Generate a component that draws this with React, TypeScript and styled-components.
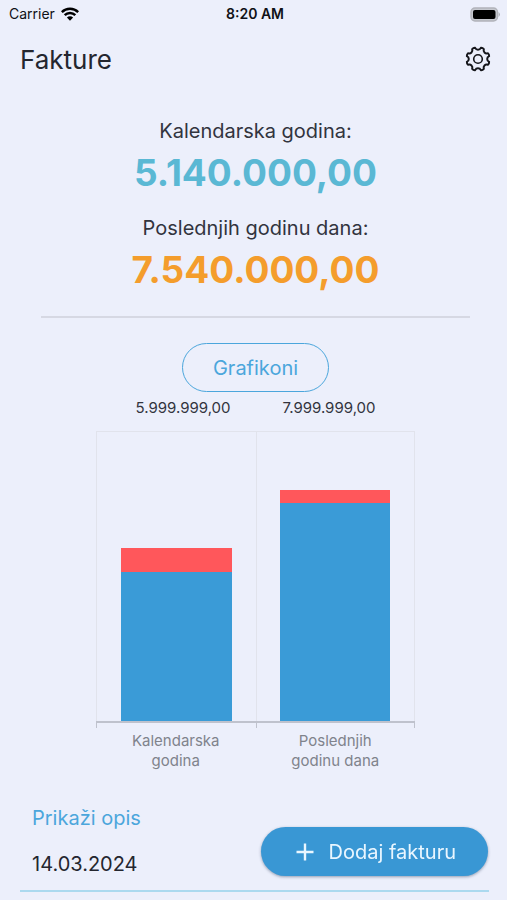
import React from 'react';
import styled, { createGlobalStyle } from 'styled-components';

const colors = {
  page: '#eceffb',
  ink: '#24262f',
  text: '#32343e',
  muted: '#80838c',
  blue: '#3a9bd7',
  link: '#4ba6dc',
  teal: '#5ab8d4',
  orange: '#f49d2c',
  red: '#ff575b',
  grid: '#e1e3ec',
  axis: '#bfc2cd',
};

const GlobalStyle = createGlobalStyle`
  *, *::before, *::after { box-sizing: border-box; }
  body {
    margin: 0;
    background: ${colors.page};
    color: ${colors.ink};
    font-family: Inter, Roboto, sans-serif;
  }
  button { font: inherit; cursor: pointer; }
`;

const Screen = styled.div`
  position: relative;
  display: flex;
  flex-direction: column;
  min-height: 100vh;
  overflow: hidden;
`;

const StatusBar = styled.div`
  display: grid;
  grid-template-columns: 1fr auto 1fr;
  align-items: center;
  height: 28px;
  padding: 0 6px 0 9px;
  font-size: 14px;
  line-height: 20px;
  color: #101116;
`;

const Carrier = styled.span`
  display: flex;
  align-items: center;
  gap: 6px;
`;

const Clock = styled.span`
  font-weight: 600;
`;

const BatterySlot = styled.span`
  display: flex;
  justify-content: flex-end;
`;

const Header = styled.header`
  display: flex;
  align-items: center;
  justify-content: space-between;
  height: 62px;
  padding: 0 16px 0 20px;
`;

const Title = styled.h1`
  margin: 0;
  padding-top: 2px;
  font-size: 26px;
  line-height: 32px;
  font-weight: 400;
`;

const IconButton = styled.button`
  display: flex;
  padding: 0;
  border: 0;
  background: none;
  color: #15161b;
`;

const Summary = styled.main`
  display: flex;
  flex-direction: column;
  align-items: center;
  padding: 28px 37px 0 41px;
`;

const Total = styled.section`
  display: flex;
  flex-direction: column;
  align-items: center;
  margin-bottom: 21px;
`;

const TotalLabel = styled.h2`
  margin: 0;
  font-size: 20px;
  line-height: 26px;
  font-weight: 400;
  color: ${colors.text};
`;

const Amount = styled.p<{ $color: string }>`
  margin: 0;
  padding-top: 8px;
  font-size: 37px;
  line-height: 42px;
  font-weight: 700;
  color: ${(p) => p.$color};
`;

const Divider = styled.hr`
  width: 100%;
  height: 2px;
  margin: 4px 0 25px;
  border: 0;
  background: #d6d8e3;
`;

const OutlineButton = styled.button`
  height: 49px;
  padding: 0 30px;
  border: 1px solid ${colors.link};
  border-radius: 25px;
  background: none;
  font-size: 20px;
  line-height: 26px;
  color: ${colors.link};
`;

const Chart = styled.figure`
  width: 100%;
  margin: 0;
  padding: 0 55px;
`;

const Limits = styled.div`
  display: flex;
  justify-content: center;
  gap: 52px;
  padding: 6px 0 13px;
  font-size: 15px;
  line-height: 20px;
  color: ${colors.text};
`;

const Plot = styled.div`
  display: grid;
  grid-template-columns: 1fr 1fr;
  height: 290px;
  border: solid ${colors.grid};
  border-width: 1px 1px 0;
`;

const Band = styled.div`
  display: flex;
  flex-direction: column;
  align-items: center;
  justify-content: flex-end;
  & + & { border-left: 1px solid ${colors.grid}; }
`;

const Bar = styled.div`
  width: 70%;
  flex: none;
`;

const Remaining = styled(Bar)`
  background: ${colors.red};
`;

const Earned = styled(Bar)`
  background: ${colors.blue};
`;

const Axis = styled.div`
  display: grid;
  grid-template-columns: 1fr 1fr;
  height: 7px;
  border: solid ${colors.axis};
  border-width: 2px 1px 0;
`;

const Tick = styled.span`
  & + & { border-left: 1px solid ${colors.axis}; }
`;

const Categories = styled.figcaption`
  display: grid;
  grid-template-columns: 1fr 1fr;
  padding-top: 3px;
  font-size: 15px;
  line-height: 20px;
  text-align: center;
  color: ${colors.muted};
`;

const Category = styled.span`
  justify-self: center;
  max-width: 112px;
`;

const Invoices = styled.section`
  display: flex;
  flex-direction: column;
  align-items: flex-start;
  padding: 34px 18px 0 20px;
`;

const TextButton = styled.button`
  padding: 0;
  margin: 0 12px;
  border: 0;
  background: none;
  font-size: 20px;
  line-height: 26px;
  color: ${colors.link};
`;

const InvoiceRow = styled.div`
  width: 100%;
  padding: 20px 12px 13px;
  border-bottom: 2px solid #abd9ef;
  font-size: 20px;
  line-height: 26px;
`;

const AddButton = styled.button`
  position: fixed;
  right: 19px;
  bottom: 24px;
  display: flex;
  align-items: center;
  gap: 15px;
  height: 49px;
  padding: 0 32px 0 35px;
  border: 0;
  border-radius: 25px;
  background: #3997d4;
  box-shadow: 0 1px 3px rgba(40, 60, 90, 0.45);
  font-size: 20px;
  line-height: 26px;
  color: #e9f6ff;
`;

const WifiIcon = () => (
  <svg width="18" height="14" viewBox="0 0 18 14" fill="none" stroke="#000" strokeWidth="2.5" aria-hidden="true">
    <path d="M0.8 5.1A11.6 11.6 0 0 1 17.2 5.1" />
    <path d="M3.7 8.2A7.5 7.5 0 0 1 14.3 8.2" />
    <path d="M9 13.8L5.9 10.6A4.4 4.4 0 0 1 12.1 10.6Z" fill="#000" stroke="none" />
  </svg>
);

const BatteryIcon = () => (
  <svg width="31" height="15" viewBox="0 0 31 15" aria-hidden="true">
    <rect x="1" y="1" width="26.5" height="13" rx="4" fill="#c6c8cf" stroke="#b1b3ba" strokeWidth="1.4" />
    <rect x="3" y="3" width="22.5" height="9" rx="2" fill="#000" />
    <path d="M28.6 5q2.6 2.5 0 5z" fill="#a9abb2" />
  </svg>
);

const polar = (radius: number, degrees: number) => {
  const a = (degrees * Math.PI) / 180;
  return `${(13 + radius * Math.cos(a)).toFixed(2)} ${(13 + radius * Math.sin(a)).toFixed(2)}`;
};

const gearOutline =
  Array.from({ length: 8 }, (_, i) => {
    const c = 22.5 + i * 45;
    return `${i ? 'L' : 'M'}${polar(11.5, c - 8)}Q${polar(12.2, c)} ${polar(11.5, c + 8)}C${polar(8.7, c + 12)} ${polar(8.7, c + 33)} ${polar(11.5, c + 37)}`;
  }).join('') + 'Z';

const GearIcon = () => (
  <svg width="26" height="26" viewBox="0 0 26 26" fill="none" stroke="currentColor" strokeWidth="2" strokeLinejoin="round" aria-hidden="true">
    <path d={gearOutline} />
    <circle cx="13" cy="13" r="4.3" strokeWidth="1.6" />
  </svg>
);

const PlusIcon = () => (
  <svg width="18" height="18" viewBox="0 0 18 18" stroke="currentColor" strokeWidth="2.4" aria-hidden="true">
    <path d="M9 0.5V17.5M0.5 9H17.5" />
  </svg>
);

const SCALE_MAX = 10000000;

const series = [
  { name: 'Kalendarska godina', earned: 5140000, limit: 5999999, limitText: '5.999.999,00' },
  { name: 'Poslednjih godinu dana', earned: 7540000, limit: 7999999, limitText: '7.999.999,00' },
];

const share = (value: number) => `${(value / SCALE_MAX) * 100}%`;

export default function App() {
  return (
    <Screen>
      <GlobalStyle />
      <StatusBar>
        <Carrier>
          Carrier
          <WifiIcon />
        </Carrier>
        <Clock>8:20 AM</Clock>
        <BatterySlot>
          <BatteryIcon />
        </BatterySlot>
      </StatusBar>

      <Header>
        <Title>Fakture</Title>
        <IconButton type="button" aria-label="Podešavanja">
          <GearIcon />
        </IconButton>
      </Header>

      <Summary>
        <Total>
          <TotalLabel>Kalendarska godina:</TotalLabel>
          <Amount $color={colors.teal}>5.140.000,00</Amount>
        </Total>
        <Total>
          <TotalLabel>Poslednjih godinu dana:</TotalLabel>
          <Amount $color={colors.orange}>7.540.000,00</Amount>
        </Total>
        <Divider />
        <OutlineButton type="button">Grafikoni</OutlineButton>

        <Chart>
          <Limits>
            {series.map((s) => (
              <span key={s.name}>{s.limitText}</span>
            ))}
          </Limits>
          <Plot>
            {series.map((s) => (
              <Band key={s.name}>
                <Remaining style={{ height: share(s.limit - s.earned) }} />
                <Earned style={{ height: share(s.earned) }} />
              </Band>
            ))}
          </Plot>
          <Axis>
            <Tick />
            <Tick />
          </Axis>
          <Categories>
            {series.map((s) => (
              <Category key={s.name}>{s.name}</Category>
            ))}
          </Categories>
        </Chart>
      </Summary>

      <Invoices>
        <TextButton type="button">Prikaži opis</TextButton>
        <InvoiceRow>14.03.2024</InvoiceRow>
      </Invoices>

      <AddButton type="button">
        <PlusIcon />
        Dodaj fakturu
      </AddButton>
    </Screen>
  );
}
